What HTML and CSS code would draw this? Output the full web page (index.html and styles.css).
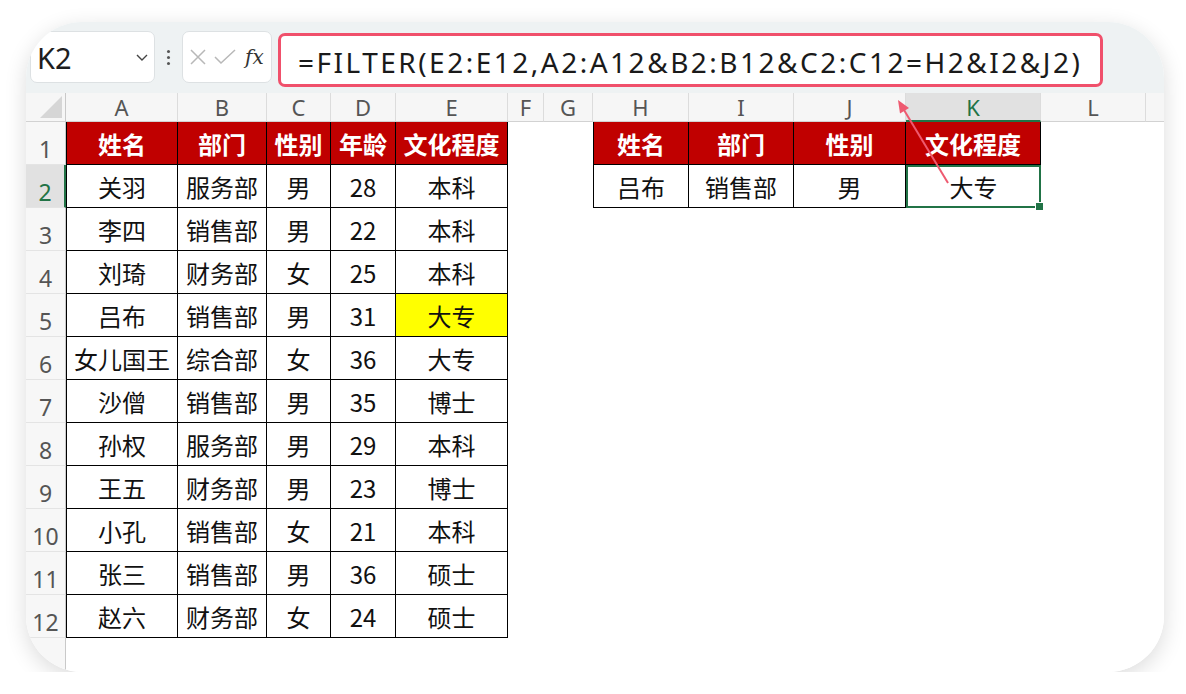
FILE: index.html
```html
<!DOCTYPE html>
<html lang="zh-CN">
<head>
<meta charset="utf-8">
<title>FILTER</title>
<link rel="stylesheet" href="styles.css">
</head>
<body>
<div class="card">
  <div class="toolbar">
    <div class="namebox">
      <span class="ref">K2</span>
      <svg class="chev" width="14" height="10" viewBox="0 0 14 10"><polyline points="2,3 7,8 12,3" fill="none" stroke="#444" stroke-width="1.4"/></svg>
    </div>
    <div class="dots"><i></i><i></i><i></i></div>
    <div class="fnbox">
      <svg width="18" height="18" viewBox="0 0 18 18"><path d="M2 2 L16 16 M16 2 L2 16" stroke="#b8b8b8" stroke-width="1.5" fill="none"/></svg>
      <svg width="24" height="18" viewBox="0 0 24 18"><polyline points="2,9 8,15 22,2" stroke="#b8b8b8" stroke-width="1.5" fill="none"/></svg>
      <span class="fx">fx</span>
    </div>
    <div class="formula">=FILTER(E2:E12,A2:A12&amp;B2:B12&amp;C2:C12=H2&amp;I2&amp;J2)</div>
  </div>

  <div class="sheet">
    <!-- column headers -->
    <div class="ch corner"><span class="tri"></span></div>
    <div class="ch">A</div><div class="ch">B</div><div class="ch">C</div><div class="ch">D</div><div class="ch">E</div>
    <div class="ch">F</div><div class="ch">G</div><div class="ch">H</div><div class="ch">I</div><div class="ch">J</div>
    <div class="ch act">K</div><div class="ch">L</div><div class="ch last"></div>

    <!-- row 1 -->
    <div class="rh">1</div>
    <div class="c t hd first">姓名</div><div class="c t hd">部门</div><div class="c t hd">性别</div><div class="c t hd">年龄</div><div class="c t hd">文化程度</div>
    <div class="blank span2"></div>
    <div class="c t hd first">姓名</div><div class="c t hd">部门</div><div class="c t hd">性别</div><div class="c t hd">文化程度</div>
    <div class="blank span2"></div>

    <!-- row 2 -->
    <div class="rh act">2</div>
    <div class="c t first">关羽</div><div class="c t">服务部</div><div class="c t">男</div><div class="c t">28</div><div class="c t">本科</div>
    <div class="blank span2"></div>
    <div class="c t first">吕布</div><div class="c t">销售部</div><div class="c t">男</div><div class="c t sel">大专</div>
    <div class="blank span2"></div>

    <div class="rh">3</div>
    <div class="c t first">李四</div><div class="c t">销售部</div><div class="c t">男</div><div class="c t">22</div><div class="c t">本科</div>
    <div class="blank rest"></div>

    <div class="rh">4</div>
    <div class="c t first">刘琦</div><div class="c t">财务部</div><div class="c t">女</div><div class="c t">25</div><div class="c t">本科</div>
    <div class="blank rest"></div>

    <div class="rh">5</div>
    <div class="c t first">吕布</div><div class="c t">销售部</div><div class="c t">男</div><div class="c t">31</div><div class="c t yel">大专</div>
    <div class="blank rest"></div>

    <div class="rh">6</div>
    <div class="c t first">女儿国王</div><div class="c t">综合部</div><div class="c t">女</div><div class="c t">36</div><div class="c t">大专</div>
    <div class="blank rest"></div>

    <div class="rh">7</div>
    <div class="c t first">沙僧</div><div class="c t">销售部</div><div class="c t">男</div><div class="c t">35</div><div class="c t">博士</div>
    <div class="blank rest"></div>

    <div class="rh">8</div>
    <div class="c t first">孙权</div><div class="c t">服务部</div><div class="c t">男</div><div class="c t">29</div><div class="c t">本科</div>
    <div class="blank rest"></div>

    <div class="rh">9</div>
    <div class="c t first">王五</div><div class="c t">财务部</div><div class="c t">男</div><div class="c t">23</div><div class="c t">博士</div>
    <div class="blank rest"></div>

    <div class="rh">10</div>
    <div class="c t first">小孔</div><div class="c t">销售部</div><div class="c t">女</div><div class="c t">21</div><div class="c t">本科</div>
    <div class="blank rest"></div>

    <div class="rh">11</div>
    <div class="c t first">张三</div><div class="c t">销售部</div><div class="c t">男</div><div class="c t">36</div><div class="c t">硕士</div>
    <div class="blank rest"></div>

    <div class="rh">12</div>
    <div class="c t first">赵六</div><div class="c t">财务部</div><div class="c t">女</div><div class="c t">24</div><div class="c t">硕士</div>
    <div class="blank rest"></div>

    <div class="rh empty"></div>
    <div class="blank all"></div>
  </div>

  <svg class="arrow" width="1138" height="650" viewBox="0 0 1138 650">
    <line x1="922" y1="161" x2="878" y2="88" stroke="#ee5a70" stroke-width="2"/>
    <polygon points="872,78 883,86 874,91.5" fill="#ee5a70"/>
  </svg>
</div>
</body>
</html>
```

FILE: styles.css
```css
* { box-sizing: border-box; }

body {
  margin: 0;
  background: #ffffff;
  font-family: "Noto Sans CJK SC", "Noto Sans", sans-serif;
  color: #111;
}

.card {
  position: relative;
  margin: 22px 0 0 26px;
  width: 1138px;
  height: 650px;
  border-radius: 56px;
  overflow: hidden;
  background: #fff;
  box-shadow: 0 6px 22px rgba(0, 0, 0, 0.14);
}

/* ---------- toolbar ---------- */
.toolbar {
  height: 71px;
  background: #eef2f3;
  display: flex;
  align-items: flex-start;
  padding: 9px 0 0 4px;
}

.namebox {
  width: 125px;
  height: 52px;
  background: #fff;
  border: 1px solid #dde1e3;
  border-radius: 7px;
  display: flex;
  align-items: center;
  justify-content: space-between;
  padding: 0 5px 0 6px;
}

.namebox .ref {
  font-family: "Noto Sans", sans-serif;
  font-size: 29px;
  color: #1e1e1e;
  line-height: 1;
}

.dots {
  width: 27px;
  height: 52px;
  display: flex;
  flex-direction: column;
  align-items: center;
  justify-content: center;
  gap: 3px;
}

.dots i {
  display: block;
  width: 3px;
  height: 3px;
  border-radius: 50%;
  background: #555;
}

.fnbox {
  width: 90px;
  height: 52px;
  background: #fff;
  border: 1px solid #dde1e3;
  border-radius: 7px;
  display: flex;
  align-items: center;
  padding: 0 0 0 6px;
  gap: 6px;
}

.fnbox .fx {
  font-family: "DejaVu Serif", "Liberation Serif", serif;
  font-style: italic;
  font-size: 20px;
  color: #333;
  margin-left: 2px;
}

.formula {
  margin: 2px 0 0 6px;
  width: 825px;
  height: 54px;
  background: #fff;
  border: 3px solid #f0506b;
  border-radius: 7px;
  display: flex;
  align-items: center;
  padding: 3px 0 0 17px;
  font-family: "Noto Sans", sans-serif;
  font-size: 28px;
  letter-spacing: 2.5px;
  color: #1a1a1a;
  white-space: nowrap;
}

/* ---------- sheet ---------- */
.sheet {
  display: grid;
  grid-template-columns: 40px 112px 89px 64px 65px 112px 36px 49px 96px 105px 112px 135px 105px 1fr;
  grid-template-rows: 29px repeat(12, 43px) 1fr;
  height: 579px;
}

.ch {
  background: #f6f6f6;
  border-right: 1px solid #dcdcdc;
  border-bottom: 1px solid #d2d2d2;
  display: flex;
  align-items: center;
  justify-content: center;
  font-family: "Noto Sans", sans-serif;
  font-size: 22px;
  color: #555;
}

.ch.last { border-right: none; }

.ch.act {
  background: #e1e1e1;
  color: #217346;
  border-bottom: 2px solid #217346;
}

.ch.corner {
  position: relative;
  border-right: 1px solid #c9c9c9;
}

.tri {
  position: absolute;
  right: 3px;
  bottom: 3px;
  width: 0;
  height: 0;
  border-style: solid;
  border-width: 0 0 22px 22px;
  border-color: transparent transparent #d6d6d6 transparent;
}

.rh {
  background: #f7f7f7;
  border-right: 1px solid #c9c9c9;
  border-bottom: 1px solid #e4e4e4;
  display: flex;
  align-items: flex-end;
  justify-content: center;
  padding-bottom: 0;
  font-family: "Noto Sans", sans-serif;
  font-size: 23px;
  line-height: 1.2;
  color: #555;
}

.rh.act {
  background: #e1e1e1;
  color: #217346;
  border-right: 2px solid #217346;
}

.rh.empty { border-bottom: none; }

.c {
  display: flex;
  align-items: center;
  justify-content: center;
  font-size: 24px;
  color: #111;
  white-space: nowrap;
}

.t {
  border-right: 1px solid #000;
  border-bottom: 1px solid #000;
}

.t.first { border-left: 1px solid #000; }

.hd {
  background: #c00000;
  color: #fff;
  font-weight: 700;
}

.yel { background: #ffff00; }

.sel {
  position: relative;
  border: 2px solid #217346;
}

.sel::after {
  content: "";
  position: absolute;
  right: -5px;
  bottom: -5px;
  width: 7px;
  height: 7px;
  background: #217346;
  border: 1px solid #fff;
}

.blank { background: #fff; }
.span2 { grid-column: span 2; }
.rest { grid-column: 7 / -1; }
.all { grid-column: 2 / -1; }

.arrow {
  position: absolute;
  left: 0;
  top: 0;
  pointer-events: none;
}
```
